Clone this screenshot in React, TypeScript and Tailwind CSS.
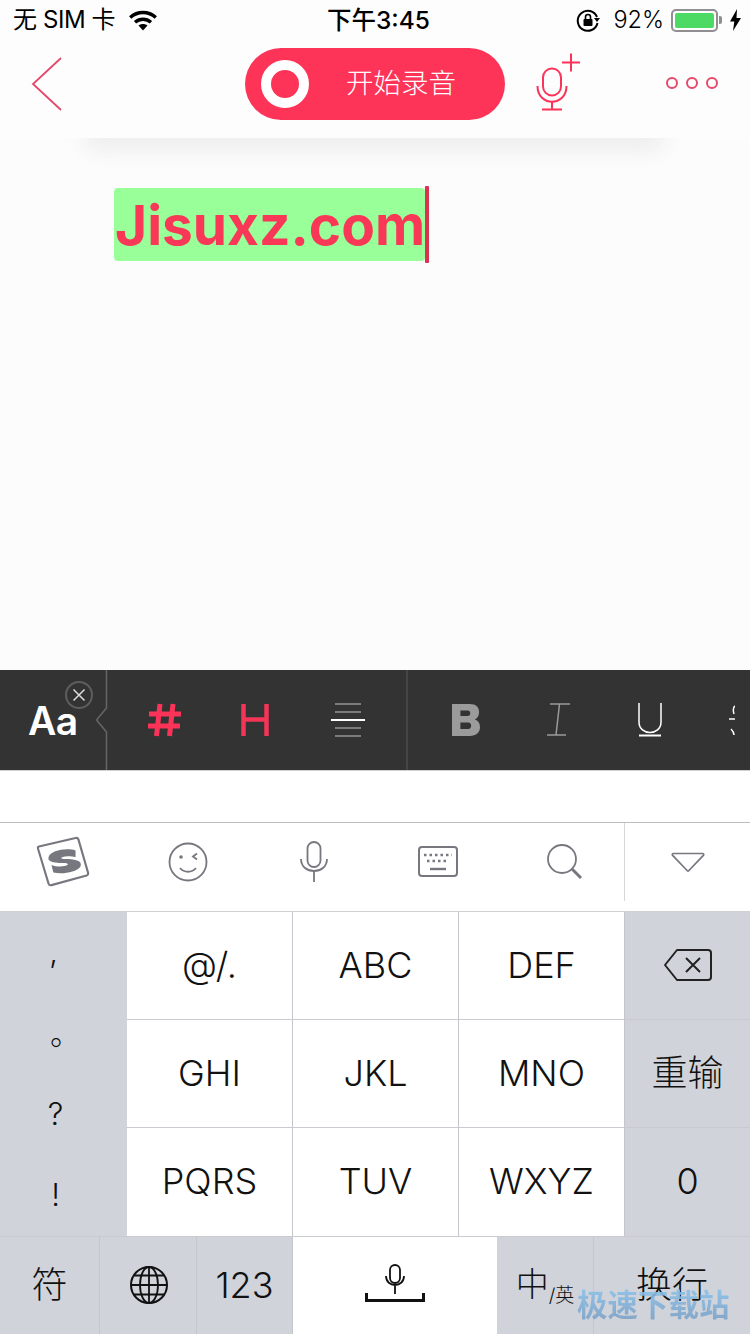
import React from "react";

const RED = "#fb3358";
const GR = "#77777f";

function Wifi() {
  return (
    <svg width="28" height="21" viewBox="0 0 28 21" fill="none">
      <path d="M1.200 7.500C8.500 .8 19.500 .8 26.800 7.500" stroke="#000" strokeWidth="3.400" />
      <path d="M6 12.300C10.800 8.200 17.200 8.200 22 12.300" stroke="#000" strokeWidth="3.400" />
      <path d="M9.500 15.500C12 13.500 16 13.500 18.500 15.500L14 20.500Z" fill="#000" />
    </svg>
  );
}

function StatusBar() {
  return (
    <div className="relative flex h-[40px] items-center justify-between pl-[13px] pr-[8px] text-[24px] text-black">
      <div className="flex items-center">
        <span className="tracking-[-0.4px]">无 SIM 卡</span>
        <span className="ml-[14px] flex"><Wifi /></span>
      </div>
      <span className="absolute left-[327px] top-[2px] text-[24.500px] font-medium leading-[36px]">下午3:45</span>
      <div className="flex items-center">
        <svg width="24" height="24" viewBox="0 0 24 24" fill="none" className="mr-[13px]">
          <path d="M21 9A10 10 0 1 0 21.500 15" stroke="#000" strokeWidth="2" />
          <path d="M18 10h6l-3 4z" fill="#000" />
          <rect x="7.500" y="11" width="9" height="7" rx="1" fill="#000" />
          <path d="M9.500 11V9a2.500 2.500 0 0 1 5 0v2" stroke="#000" strokeWidth="1.600" />
        </svg>
        <span className="text-[23.500px] font-light">92%</span>
        <div className="ml-[7px] flex h-[23px] w-[47px] items-center rounded-[5px] border-2 border-[#8e8e93] p-[2px]">
          <div className="h-full w-full rounded-[2px] bg-[#4cd964]" />
        </div>
        <div className="ml-[1px] h-[8px] w-[3px] rounded-r-[2px] bg-[#8e8e93]" />
        <svg width="13" height="22" viewBox="0 0 13 22" className="ml-[7px]">
          <path d="M8 0 1 12.500h4.300L4 22l8-13H7.500z" fill="#000" />
        </svg>
      </div>
    </div>
  );
}

function Header() {
  return (
    <div className="relative z-10 flex h-[98px] items-start bg-[#fdfdfd] pl-[30px]">
      <svg width="34" height="56" viewBox="0 0 34 56" fill="none" className="mt-[16px]">
        <path d="M31 2 3 28l28 26" stroke="#e4486a" strokeWidth="1.800" />
      </svg>
      <div className="ml-[181px] mt-[8px] flex h-[72px] w-[260px] items-center rounded-full bg-[#fd3358] pl-[16px]">
        <div className="h-[48px] w-[48px] rounded-full border-[10px] border-white" />
        <span className="ml-[37px] text-[27.500px] font-light leading-none text-white">开始录音</span>
      </div>
      <svg width="52" height="60" viewBox="0 0 52 60" fill="none" className="ml-[29px] mt-[13px]">
        <rect x="9" y="15.500" width="18" height="27" rx="9" stroke={RED} strokeWidth="2" />
        <path d="M3.500 33c0 21 29 21 29 0M18 49v7.500M8 56.500h20M28 9.500h18M37 .5v18" stroke={RED} strokeWidth="2" />
      </svg>
      <div className="ml-[80px] mt-[37px] flex gap-[8px]">
        <div className="h-[12px] w-[12px] rounded-full border-2 border-[#e4486a]" />
        <div className="h-[12px] w-[12px] rounded-full border-2 border-[#e4486a]" />
        <div className="h-[12px] w-[12px] rounded-full border-2 border-[#e4486a]" />
      </div>
    </div>
  );
}

function Editor() {
  return (
    <div className="relative h-[532px] bg-[#fcfcfc] pl-[114px] pt-[50px]">
      <div className="absolute left-[85px] right-[85px] -top-[12px] h-[24px] rounded-full bg-[#ececec] blur-[10px]" />
      <div className="relative flex items-start">
        <span className="flex h-[73px] items-center rounded-[4px] bg-[#99ff99] pb-[-1px] pl-[1px] pt-[2px] text-[55px] font-bold leading-none text-[#f93858]">
          Jisuxz.com
        </span>
        <div className="-mt-[2px] h-[77px] w-[4px] rounded-[1px] bg-[#d9344f]" />
      </div>
    </div>
  );
}

function Toolbar() {
  return (
    <div className="flex h-[101px] border-b border-[#d0d0d0] bg-[#333333]">
      <div className="relative flex w-[107px] items-center">
        <span className="ml-[28px] text-[39px] font-semibold leading-none tracking-[-0.5px] text-white">Aa</span>
        <div className="absolute left-[65px] top-[11px] flex h-[28px] w-[28px] items-center justify-center rounded-full border-2 border-[#5d5d5d]">
          <svg width="14" height="14" viewBox="0 0 14 14">
            <path d="M1.500 1.500l11 11M12.500 1.500l-11 11" stroke="#ddd" strokeWidth="1.500" />
          </svg>
        </div>
        <svg width="14" height="100" viewBox="0 0 14 100" fill="none" className="absolute left-[94px] top-0">
          <path d="M12.500 0v38l-10 12 10 12v38" stroke="#666" strokeWidth="1.500" />
        </svg>
      </div>
      <div className="flex w-[301px] items-center border-r-2 border-[#454545]">
        <svg width="34" height="34" viewBox="0 0 34 34" fill="none" className="ml-[41px]">
          <path d="M12 1 8.500 33M25 1l-3.500 32M1 11h32M0 23h32" stroke={RED} strokeWidth="5" />
        </svg>
        <svg width="28" height="32" viewBox="0 0 28 32" fill="none" className="ml-[59px]">
          <path d="M2.500 0v32M25.500 0v32M2.500 15.500h23" stroke="#f43557" strokeWidth="4.500" />
        </svg>
        <svg width="34" height="34" viewBox="0 0 34 34" fill="none" className="ml-[62px]">
          <path d="M4 1h26M4 9h26M4 25h26M4 33h26" stroke="#7b7b7b" strokeWidth="2" />
          <path d="M0 17h34" stroke="#fff" strokeWidth="2" />
        </svg>
      </div>
      <div className="flex flex-1 items-center overflow-hidden">
        <svg width="28" height="32" viewBox="0 0 30 32" preserveAspectRatio="none" className="ml-[44px]">
          <path fillRule="evenodd" d="M0 0h19c7 0 10 3.500 10 8 0 3.500-1.500 6-4.500 7.500 3.500 1 5.500 3.500 5.500 7.500 0 5.500-4 9-11 9H0zM9 6.500v5.500h8c1.500 0 2.500-1 2.500-2.750S18.500 6.500 17 6.500zM9 18.500V25h8.500c2 0 3-1.300 3-3.250s-1-3.250-3-3.250z" fill="#9b9b9b" />
        </svg>
        <svg width="24" height="34" viewBox="0 0 24 34" fill="none" className="ml-[66px]">
          <path d="M4 1h20M1 32h19M13.500 1 10 32" stroke="#9b9b9b" strokeWidth="1.500" />
        </svg>
        <svg width="24" height="34" viewBox="0 0 24 34" fill="none" className="ml-[68px]">
          <path d="M1 0v19c0 14 22 14 22 0V0" stroke="#fff" strokeWidth="1.500" />
          <path d="M1 32.500h22" stroke="#fff" strokeWidth="2" />
        </svg>
        <svg width="6" height="34" viewBox="0 0 6 34" fill="none" className="ml-[67px]">
          <path d="M6 3C4 4 4 8 5 11M0 16h6M2 26c2 2 3 3 3 6" stroke="#fff" strokeWidth="1.500" />
        </svg>
      </div>
    </div>
  );
}

function Candidates() {
  return (
    <div className="flex h-[89px] items-start border-t border-[#bdbdbd] bg-white">
      <div className="flex h-[78px] w-[624px] items-center">
        <svg width="54" height="52" viewBox="0 0 56 54" fill="none" className="ml-[36px]">
          <path d="M3 11 41 2c1.500-.4 2.500.2 3 1.500L54 38c.4 1.500-.2 2.500-1.500 3L16 51c-1.500.4-2.500-.2-3-1.500L2 13c-.3-1 0-1.700 1-2Z" stroke={GR} strokeWidth="2.200" fill="#fff" />
          <path d="M41 15C31 12 15 15 13 22c-1.500 6 10 6 16 6 4 0 5 1.500 3 2.500-3 1.500-11 1.500-16-.5l2 8c9 2 24 0 28-6 3-6-5-8-15-8-4 0-6-1-4-2 4-1.500 10-1 14 0z" fill={GR} />
        </svg>
        <svg width="40" height="40" viewBox="0 0 40 40" fill="none" className="ml-[78px]">
          <circle cx="20" cy="20" r="18.500" stroke={GR} strokeWidth="1.800" />
          <circle cx="13" cy="15" r="1.800" fill={GR} />
          <path d="M29 11.500l-4 3 4 3M12 26c4 5 12 5 16 0" stroke={GR} strokeWidth="1.800" />
        </svg>
        <svg width="28" height="42" viewBox="0 0 28 42" fill="none" className="ml-[92px]">
          <rect x="7.500" y="1" width="13" height="25" rx="6.500" stroke={GR} strokeWidth="1.800" />
          <path d="M1 18c0 16 26 16 26 0M14 31v10" stroke={GR} strokeWidth="1.800" />
        </svg>
        <svg width="40" height="32" viewBox="0 0 40 32" fill="none" className="ml-[90px]">
          <rect x="1" y="1" width="38" height="29" rx="3" stroke={GR} strokeWidth="2" />
          <path d="M6 9h28M9 15h20" stroke={GR} strokeWidth="2.400" strokeDasharray="2.500 3" />
          <path d="M12 23h16" stroke={GR} strokeWidth="2.400" />
        </svg>
        <svg width="36" height="36" viewBox="0 0 36 36" fill="none" className="ml-[89px]">
          <circle cx="15" cy="15" r="14" stroke={GR} strokeWidth="1.800" />
          <path d="M25 25l9 9" stroke={GR} strokeWidth="3" />
        </svg>
      </div>
      <div className="flex h-[78px] flex-1 items-center border-l border-[#d6d6d6] pl-[46px]">
        <svg width="34" height="22" viewBox="0 0 36 22" fill="none">
          <path d="M2.500 2h31c1 0 1.500 1 1 1.700L19 20c-.6.500-1.400.500-2 0L1.500 3.700C1 3 1.500 2 2.500 2Z" stroke={GR} strokeWidth="1.800" />
        </svg>
      </div>
    </div>
  );
}

const keyText = "text-[36px] font-light leading-none text-[#111]";

function Key({ label, w, gray }: { label: React.ReactNode; w: string; gray?: boolean }) {
  return (
    <div className={`flex items-center justify-center border-r border-[#c4c6cb] pb-[2px] ${w} ${gray ? "bg-[#d0d3da]" : "bg-white"} ${keyText}`}>
      {label}
    </div>
  );
}

function Keyboard() {
  const rows = [
    { keys: ["@/.", "ABC", "DEF"], last: null },
    { keys: ["GHI", "JKL", "MNO"], last: "重输" },
    { keys: ["PQRS", "TUV", "WXYZ"], last: "0" },
  ];
  return (
    <div className="flex flex-col">
      <div className="flex border-t border-[#d0d1d4]">
        <div className="flex w-[127px] flex-col items-center bg-[#d0d3da] pr-[16px] text-[31px] font-light leading-[34px] text-[#111]">
          <span className="mr-[4px] mt-[23px]">,</span>
          <span className="ml-[20px] mt-[48px]">。</span>
          <span className="mt-[46px]">?</span>
          <span className="mt-[47px]">!</span>
        </div>
        <div className="flex flex-1 flex-col">
          {rows.map((r, i) => (
            <div key={i} className={`flex h-[108px] ${i < 2 ? "border-b border-[#c9cbd0]" : ""}`}>
              {r.keys.map((k) => (
                <Key key={k} label={k} w="w-[166px]" />
              ))}
              <div className={`flex flex-1 items-center justify-center bg-[#d0d3da] pb-[2px] ${keyText}`}>
                {r.last ?? (
                  <svg width="50" height="34" viewBox="0 0 50 34" fill="none">
                    <path d="M14 2h31c1.700 0 3 1.300 3 3v24c0 1.700-1.300 3-3 3H14L2 17z" stroke="#222" strokeWidth="2" strokeLinejoin="round" />
                    <path d="M23 10l14 14M37 10 23 24" stroke="#222" strokeWidth="2" />
                  </svg>
                )}
              </div>
            </div>
          ))}
        </div>
      </div>
      <div className="relative flex h-[98px] border-t border-[#c9cbd0]">
        <Key label="符" w="w-[100px]" gray />
        <Key
          w="w-[97px]"
          gray
          label={
            <svg width="40" height="40" viewBox="0 0 40 40" fill="none" className="ml-[1px]">
              <circle cx="20" cy="20" r="18" stroke="#111" strokeWidth="2" />
              <ellipse cx="20" cy="20" rx="9" ry="18" stroke="#111" strokeWidth="1.800" />
              <path d="M20 2v36M2 20h36M5 10.500h30M5 29.500h30" stroke="#111" strokeWidth="1.800" />
            </svg>
          }
        />
        <Key label="123" w="w-[96px]" gray />
        <div className="flex w-[204px] flex-col items-center bg-white pt-[27px]">
          <svg width="20" height="30" viewBox="0 0 20 30" fill="none">
            <rect x="5" y="1" width="10" height="18" rx="5" stroke="#111" strokeWidth="1.800" />
            <path d="M1 12c0 12 18 12 18 0M10 22v8" stroke="#111" strokeWidth="1.800" />
          </svg>
          <div className="-mt-[1px] h-[9px] w-[60px] border-x-[3px] border-b-[3px] border-[#111]" />
        </div>
        <div className="flex w-[97px] items-center justify-center border-r border-[#c4c6cb] bg-[#d0d3da] pb-[2px] font-light text-[#111]">
          <span className="text-[33px] leading-none">中</span>
          <span className="mt-[22px] text-[19px] leading-none">/英</span>
        </div>
        <div className={`flex flex-1 items-center justify-center bg-[#d0d3da] pb-[2px] ${keyText}`}>换行</div>
        <span className="absolute left-[577px] top-[50px] bg-gradient-to-b from-[#8cc4ec] to-[#7b9fc4] bg-clip-text text-[30.500px] font-bold leading-[36px] text-transparent opacity-90">
          极速下载站
        </span>
      </div>
    </div>
  );
}

export default function App() {
  return (
    <div
      className="flex h-[1334px] w-[750px] flex-col overflow-hidden bg-white"
      style={{ fontFamily: "Inter, 'Noto Sans CJK SC', sans-serif" }}
    >
      <div className="bg-[#fdfdfd]">
        <StatusBar />
      </div>
      <Header />
      <Editor />
      <Toolbar />
      <div className="h-[51px] bg-white" />
      <Candidates />
      <Keyboard />
    </div>
  );
}
